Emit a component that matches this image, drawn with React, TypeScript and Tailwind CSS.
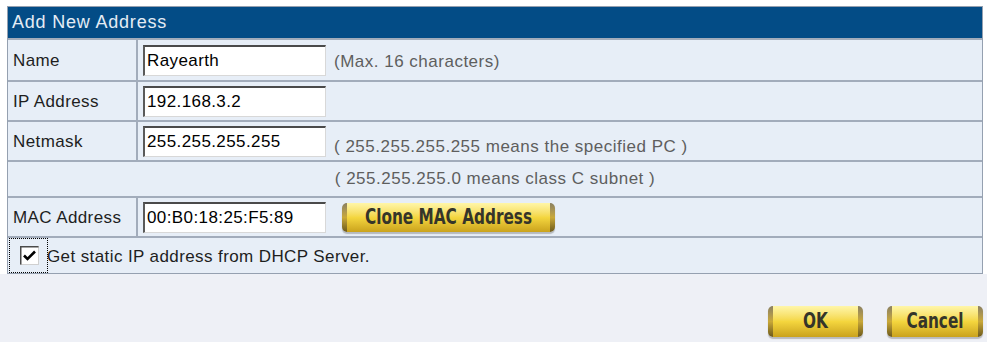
import React from "react";

const body = "font-['Liberation_Sans',Arial,sans-serif]";

const Field = ({ value }: { value: string }) => (
  <div className="w-[183px] h-[31px] bg-white border-t-2 border-l-2 border-t-[#4a4a4a] border-l-[#5a5a5a] border-b border-r border-b-[#d8d8d8] border-r-[#d8d8d8] flex items-center pl-[2px] text-[17px] tracking-[0.4px] text-black">
    {value}
  </div>
);

const GoldButton = ({ label, className = "" }: { label: string; className?: string }) => (
  <button
    type="button"
    className={`flex items-stretch rounded-[5px] overflow-hidden shadow-[0_2px_1px_rgba(120,120,120,0.45)] ${className}`}
  >
    <span className="w-[5px] bg-gradient-to-b from-[#8a8060] via-[#c9a838] to-[#6d5a1c]" />
    <span className="flex-1 flex items-center justify-center bg-gradient-to-b from-[#fff6a8] via-[#f4d63e] to-[#caa21c] font-['DejaVu_Sans_Condensed','Liberation_Sans_Narrow',sans-serif] font-bold text-[17px] leading-none text-[#35352a]">
      <span className="inline-block scale-y-[1.22]">{label}</span>
    </span>
    <span className="w-[5px] bg-gradient-to-b from-[#8a8060] via-[#c9a838] to-[#6d5a1c]" />
  </button>
);

const Row = ({
  label,
  children,
  h,
}: {
  label: string;
  children: React.ReactNode;
  h: string;
}) => (
  <div className={`flex border-t-2 border-[#a2acbb] ${h}`}>
    <div className="w-[130px] shrink-0 flex items-center pl-[5px] pt-[2px] border-r-2 border-[#a2acbb] text-[17px] tracking-[0.4px] text-[#1e1e1e]">
      {label}
    </div>
    <div className="flex-1 flex items-center pl-[5px] gap-[8px]">{children}</div>
  </div>
);

const Hint = ({ children }: { children: React.ReactNode }) => (
  <span className="text-[17px] tracking-[0.5px] text-[#5e5e5e]">{children}</span>
);

export default function App() {
  return (
    <div className={`w-[987px] h-[342px] bg-white ${body}`}>
      <div className="pt-[6px] pl-[7px] pr-[4px] bg-white">
        <div className="border border-[#95a0b0] bg-[#e7eef7]">
          <div className="h-[31px] bg-[#034c86] flex items-center pl-[4px] text-[18px] tracking-[0.8px] text-[#e4ecf5]">
            Add New Address
          </div>
          <Row label="Name" h="h-[42px]">
            <Field value="Rayearth" />
            <span className="pt-[3px]">
              <Hint>(Max. 16 characters)</Hint>
            </span>
          </Row>
          <Row label="IP Address" h="h-[40px]">
            <Field value="192.168.3.2" />
          </Row>
          <Row label="Netmask" h="h-[40px]">
            <Field value="255.255.255.255" />
            <span className="pt-[12px]">
              <Hint>( 255.255.255.255 means the specified PC )</Hint>
            </span>
          </Row>
          <div className="h-[36px] border-t-2 border-[#a2acbb] flex items-center justify-center">
            <Hint>( 255.255.255.0 means class C subnet )</Hint>
          </div>
          <Row label="MAC Address" h="h-[40px]">
            <Field value="00:B0:18:25:F5:89" />
            <GoldButton label="Clone MAC Address" className="ml-[8px] w-[213px] h-[29px]" />
          </Row>
          <div className="h-[37px] border-t-2 border-[#a2acbb] flex items-center">
            <span className="ml-[1px] w-[39px] h-[35px] border border-dotted border-black flex items-center justify-center">
              <svg width="19" height="19" viewBox="0 0 19 19" className="ml-[1px]">
                <rect x="0.5" y="0.5" width="18" height="18" fill="#fff" stroke="#d0d0d0" />
                <path d="M0.5 18.5V0.5H18.5" fill="none" stroke="#4a4a4a" strokeWidth="2" />
                <path d="M4 9.5l3.5 3.5L15 5.5" fill="none" stroke="#000" strokeWidth="2.6" />
              </svg>
            </span>
            <span className="text-[17px] tracking-[0.4px] text-[#1e1e1e] -ml-[1px] pt-[2px]">
              Get static IP address from DHCP Server.
            </span>
          </div>
        </div>
      </div>
      <div className="h-[68px] bg-[#eef0f6] flex justify-end items-start pt-[32px] pr-[4px] gap-[24px]">
        <GoldButton label="OK" className="w-[95px] h-[31px]" />
        <GoldButton label="Cancel" className="w-[96px] h-[31px]" />
      </div>
    </div>
  );
}
